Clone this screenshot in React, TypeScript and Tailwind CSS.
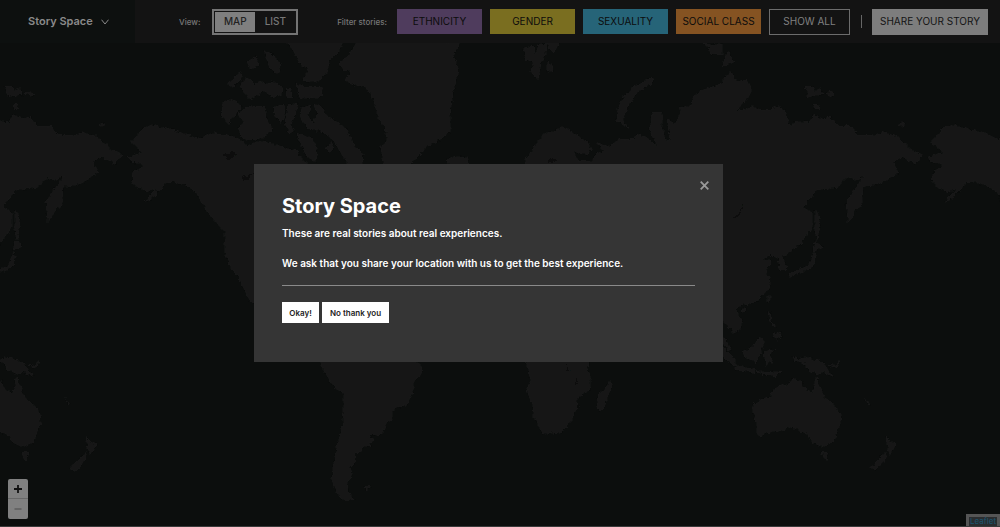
import { useState } from "react";

const LAND = [
  // North America
  "M131 142L138 135 143 129 153 125 160 128 173 131 187 135 198 140 205 137 213 133 218 135 227 135 233 138 242 142 247 147 254 143 260 142 270 144 283 147 297 152 300 157 307 164 312 200 300 260 270 300 250 302 240 278 230 267 225 253 225 232 213 220 205 208 197 193 187 186 172 182 165 182 158 189 147 192 138 188 132 182 133 173 142 168 142 164 132 163 128 158 143 153 137 148Z",
  "M167 181L160 191 151 199 145 203 149 197 157 190Z",
  "M238 277L246 279 256 292 256 306 247 296Z",
  // Arctic islands
  "M223 102L232 100 242 107 233 118 228 124 222 118Z",
  "M237 115L247 108 256 107 265 107 267 120 273 130 262 138 250 141 241 136 238 127 245 123Z",
  "M228 85L240 72 243 77 236 85 231 88Z",
  "M240 84L248 79 256 88 260 96 250 99 243 92Z",
  "M247 62L256 58 258 66 251 70Z",
  "M264 52L272 54 280 64 278 74 270 68Z",
  "M250 88L258 82 264 84 275 82 282 88 283 94 274 97 262 92 252 97Z",
  "M286 42L343 42 338 53 330 60 327 73 317 82 303 81 309 70 300 64 294 52Z",
  "M286 90L291 90 292 98 287 98Z",
  "M296 84L306 88 322 88 323 97 300 99Z",
  "M274 108L284 105 285 116 280 124 275 117Z",
  "M288 105L298 104 295 115 290 124 294 132 289 134 285 124Z",
  "M302 107L310 105 308 116 313 124 318 112 314 106 322 107 326 116 333 120 347 130 350 140 363 155 362 166 350 166 342 155 333 140 322 132 307 128 301 118Z",
  "M297 134L304 136 312 140 317 150 315 162 306 156Z",
  "M326 148L332 143 334 150 329 153Z",
  // Greenland
  "M357 42L350 55 339 63 343 70 352 72 345 80 352 85 365 87 373 98 378 118 385 128 387 140 381 148 385 170 408 170 413 162 427 147 440 140 450 133 450 117 453 93 458 70 453 57 460 42Z",
  "M446 160L454 157 462 158 469 157 466 170 452 170Z",
  // South America
  "M316 350L320 363 325 373 332 385 344 395 344 410 342 430 337 447 333 468 332 480 337 493 345 502 354 500 348 492 347 483 353 474 349 468 356 462 355 453 361 453 362 447 370 446 373 440 370 435 379 436 392 418 392 412 400 407 407 405 413 393 413 383 422 373 421 367 417 363 390 340Z",
  "M365 488L370 486 370 489 366 490Z",
  // Africa
  "M520 345L527 363 531 380 527 392 533 405 534 417 540 428 543 435 562 432 572 421 573 412 578 409 577 399 590 390 590 377 587 370 588 363 600 345Z",
  "M610 382L612 387 603 410 600 412 597 407 599 393 605 390Z",
  // Svalbard
  "M523 50L532 46 536 55 539 44 546 45 545 55 541 62 538 80 531 72 534 62 526 60Z",
  "M546 43L560 43 555 52 549 50Z",
  "M547 62L552 66 553 72 547 71Z",
  // Eurasia
  "M525 170L526 160 532 151 537 143 547 133 555 132 562 127 570 132 580 137 587 142 591 150 587 156 573 151 578 162 590 162 596 155 603 150 597 143 607 147 620 140 635 140 637 135 647 138 657 147 650 130 653 113 662 113 662 127 665 140 671 142 667 120 675 124 680 117 680 108 692 107 693 97 703 90 720 85 730 72 737 82 747 80 752 90 748 98 735 113 753 107 763 111 770 111 775 107 785 110 787 120 792 128 795 122 810 123 813 115 823 120 830 117 838 127 852 127 857 136 872 136 883 133 897 137 905 144 913 152 922 155 915 164 902 157 893 163 898 173 888 180 878 185 863 187 862 203 855 212 848 222 846 203 853 192 865 175 856 181 847 178 837 188 817 190 802 208 812 212 812 227 800 245 783 257 787 270 780 270 778 258 770 255 762 260 772 262 765 270 770 280 768 290 757 302 743 305 735 310 742 322 742 328 734 333 725 323 700 300 600 260Z",
  "M652 78L653 83 637 93 627 107 623 120 628 128 617 122 618 110 625 95 637 85Z",
  "M703 42L712 46 722 44 722 55 713 55Z",
  "M728 52L734 62 722 67Z",
  "M805 87L812 87 815 93 820 88 822 95 808 97Z",
  "M825 93L830 92 835 96 831 97Z",
  "M813 105L817 105 819 109 815 109Z",
  "M898 125L902 123 906 125 901 127Z",
  // Japan and Sakhalin
  "M815 211L818 214 820 227 817 240 815 232Z",
  "M815 241L823 247 813 251Z",
  "M813 253L816 257 813 266 806 271 795 274 790 279 789 275 797 270 808 267Z",
  // South-east Asia
  "M768 296L771 299 768 303Z",
  "M741 310L745 308 746 311 743 313Z",
  "M768 312L771 313 770 321 775 327 770 323Z",
  "M775 334L780 332 781 338 777 340 773 338Z",
  "M743 352L753 347 760 338 764 342 761 353 756 362 745 358Z",
  "M720 336L726 340 731 351 725 347Z",
  "M718 346L727 351 735 360 735 367 725 360Z",
  "M735 366L745 368 755 370 755 373 737 370Z",
  "M757 372L768 373 782 372 776 376 762 375Z",
  "M764 352L776 350 768 354 773 364 769 361 767 366 765 360Z",
  "M792 356L798 360 807 358 823 363 833 377 823 372 817 374 808 370 803 363 795 361Z",
  "M828 366L836 365 839 362 837 368Z",
  // Oceania
  "M753 405L762 400 770 398 773 392 782 385 788 387 792 380 803 382 802 388 813 394 816 378 820 387 825 398 835 407 841 415 840 425 833 443 823 447 812 443 807 433 800 432 792 427 777 432 768 433 760 437 757 434 757 423 753 414Z",
  "M822 453L829 453 826 461Z",
  "M886 437L891 443 896 445 890 455 888 450Z",
  "M885 453L887 457 876 471 870 469Z",
  "M865 399L870 404 868 404Z",
];

const LAKES = [
  "M222 156L232 152 237 155 230 160Z",
  "M240 178L247 176 254 173 247 181 243 181Z",
  "M547 163L552 157 557 163Z",
  "M731 219L739 213 744 203 743 210 737 218Z",
  "M565 362L570 372 567 370Z",
  "M575 374L578 385 576 384Z",
];

function WorldMap() {
  return (
    <svg
      className="absolute inset-0 h-full w-full"
      viewBox="0 0 1000 527"
      preserveAspectRatio="xMidYMid slice"
      aria-hidden="true"
    >
      <defs>
        <filter id="coast" x="-10%" y="-10%" width="120%" height="120%">
          <feTurbulence type="fractalNoise" baseFrequency="0.22" numOctaves="3" seed="4" />
          <feDisplacementMap in="SourceGraphic" scale="5" xChannelSelector="R" yChannelSelector="G" />
        </filter>
        <g id="world">
          <path d={LAND.join("")} fill="#191919" stroke="#191919" strokeWidth="0.6" />
          <path d={LAKES.join("")} fill="#0c0e0d" />
        </g>
      </defs>
      <g filter="url(#coast)">
        <use href="#world" x="-800" />
        <use href="#world" />
        <use href="#world" x="800" />
      </g>
    </svg>
  );
}

const FILTERS = [
  { name: "ETHNICITY", color: "bg-[#4f3c5d]" },
  { name: "GENDER", color: "bg-[#7a6e20]" },
  { name: "SEXUALITY", color: "bg-[#266478]" },
  { name: "SOCIAL CLASS", color: "bg-[#855322]" },
];

function Header() {
  return (
    <header className="relative flex h-[43px] shrink-0 items-center bg-[#131313] pr-3 text-[10px] whitespace-nowrap">
      <button className="flex h-full w-[135px] items-center gap-2 bg-[#0d100f] pl-7 text-[11px] font-semibold text-[#8a8a8a]">
        Story Space
        <svg width="8" height="6" viewBox="0 0 8 6" fill="none" stroke="currentColor" aria-hidden="true">
          <path d="M0.5 0.7L4 5L7.5 0.7" />
        </svg>
      </button>
      <div className="flex items-center gap-3 pl-11">
        <span className="text-[8px] font-medium text-[#777]">View:</span>
        <div className="flex h-[26px] w-[86px] border-2 border-[#747474] p-px">
          <button className="flex-1 bg-[#7f7f7f] font-medium text-[#222]">MAP</button>
          <button className="flex-1 font-medium text-[#777]">LIST</button>
        </div>
      </div>
      <div className="ml-auto flex items-center gap-2">
        <span className="mr-0.5 text-[8px] font-medium text-[#777]">Filter stories:</span>
        {FILTERS.map((f) => (
          <button key={f.name} className={`h-[25px] w-[85px] text-[#0c0c0c] ${f.color}`}>
            {f.name}
          </button>
        ))}
        <button className="h-[26px] w-[81px] border border-[#6c6c6c] text-[#808080]">SHOW ALL</button>
      </div>
      <div className="ml-[11px] h-[13px] w-px bg-[#666]" />
      <button className="ml-2.5 h-[26px] w-[116px] bg-[#7d7d7d] text-[#141414]">SHARE YOUR STORY</button>
    </header>
  );
}

function Dialog({ onClose }: { onClose: () => void }) {
  return (
    <div className="absolute inset-0 flex items-center justify-center pr-[23px]">
      <section
        role="dialog"
        aria-labelledby="dialog-title"
        className="relative w-[469px] max-w-full bg-[#353535] px-7 pt-7 pb-[39px] text-white"
      >
        <button onClick={onClose} aria-label="Close" className="absolute top-[15px] right-3 p-0.5 text-[#999]">
          <svg width="9" height="9" viewBox="0 0 9 9" stroke="currentColor" strokeWidth="1.8" aria-hidden="true">
            <path d="M0.7 0.7L8.3 8.3M8.3 0.7L0.7 8.3" />
          </svg>
        </button>
        <h1 id="dialog-title" className="text-[20px] leading-7 font-bold">
          Story Space
        </h1>
        <p className="mt-[3px] text-[10px] leading-5 font-semibold">These are real stories about real experiences.</p>
        <p className="mt-2.5 text-[10px] leading-5 font-semibold">
          We ask that you share your location with us to get the best experience.
        </p>
        <hr className="mt-3 mb-4 border-[#8a8a8a]" />
        <div className="flex gap-[3px] text-[8px] font-semibold text-[#222]">
          <button onClick={onClose} className="h-[21px] w-[37px] bg-white">
            Okay!
          </button>
          <button onClick={onClose} className="h-[21px] w-[67px] bg-white">
            No thank you
          </button>
        </div>
      </section>
    </div>
  );
}

export default function App() {
  const [open, setOpen] = useState(true);
  return (
    <div className="relative flex h-screen flex-col overflow-hidden border-b border-[#3a3a3a] bg-[#0c0e0d] font-['Inter','Open_Sans',sans-serif]">
      <WorldMap />
      <Header />
      <main className="flex-1">
        <div className="absolute bottom-[7px] left-2 flex w-5 flex-col overflow-hidden rounded-xs bg-[#808080]">
          <button aria-label="Zoom in" className="flex h-5 items-center justify-center border-b border-[#686868] text-[#111]">
            <svg width="8" height="8" viewBox="0 0 8 8" stroke="currentColor" strokeWidth="1.8" aria-hidden="true">
              <path d="M0 4H8M4 0V8" />
            </svg>
          </button>
          <button aria-label="Zoom out" className="flex h-5 items-center justify-center text-[#5c5c5c]">
            <svg width="8" height="8" viewBox="0 0 8 8" stroke="currentColor" strokeWidth="1.5" aria-hidden="true">
              <path d="M0.5 4H7.5" />
            </svg>
          </button>
        </div>
        <a
          href="#leaflet"
          className="absolute right-0 bottom-0 border-3 border-b-0 border-[#555] bg-[#2b2d2f] px-px text-[8px] leading-[9px] text-[#1b5570]"
        >
          Leaflet
        </a>
      </main>
      {open && <Dialog onClose={() => setOpen(false)} />}
    </div>
  );
}
